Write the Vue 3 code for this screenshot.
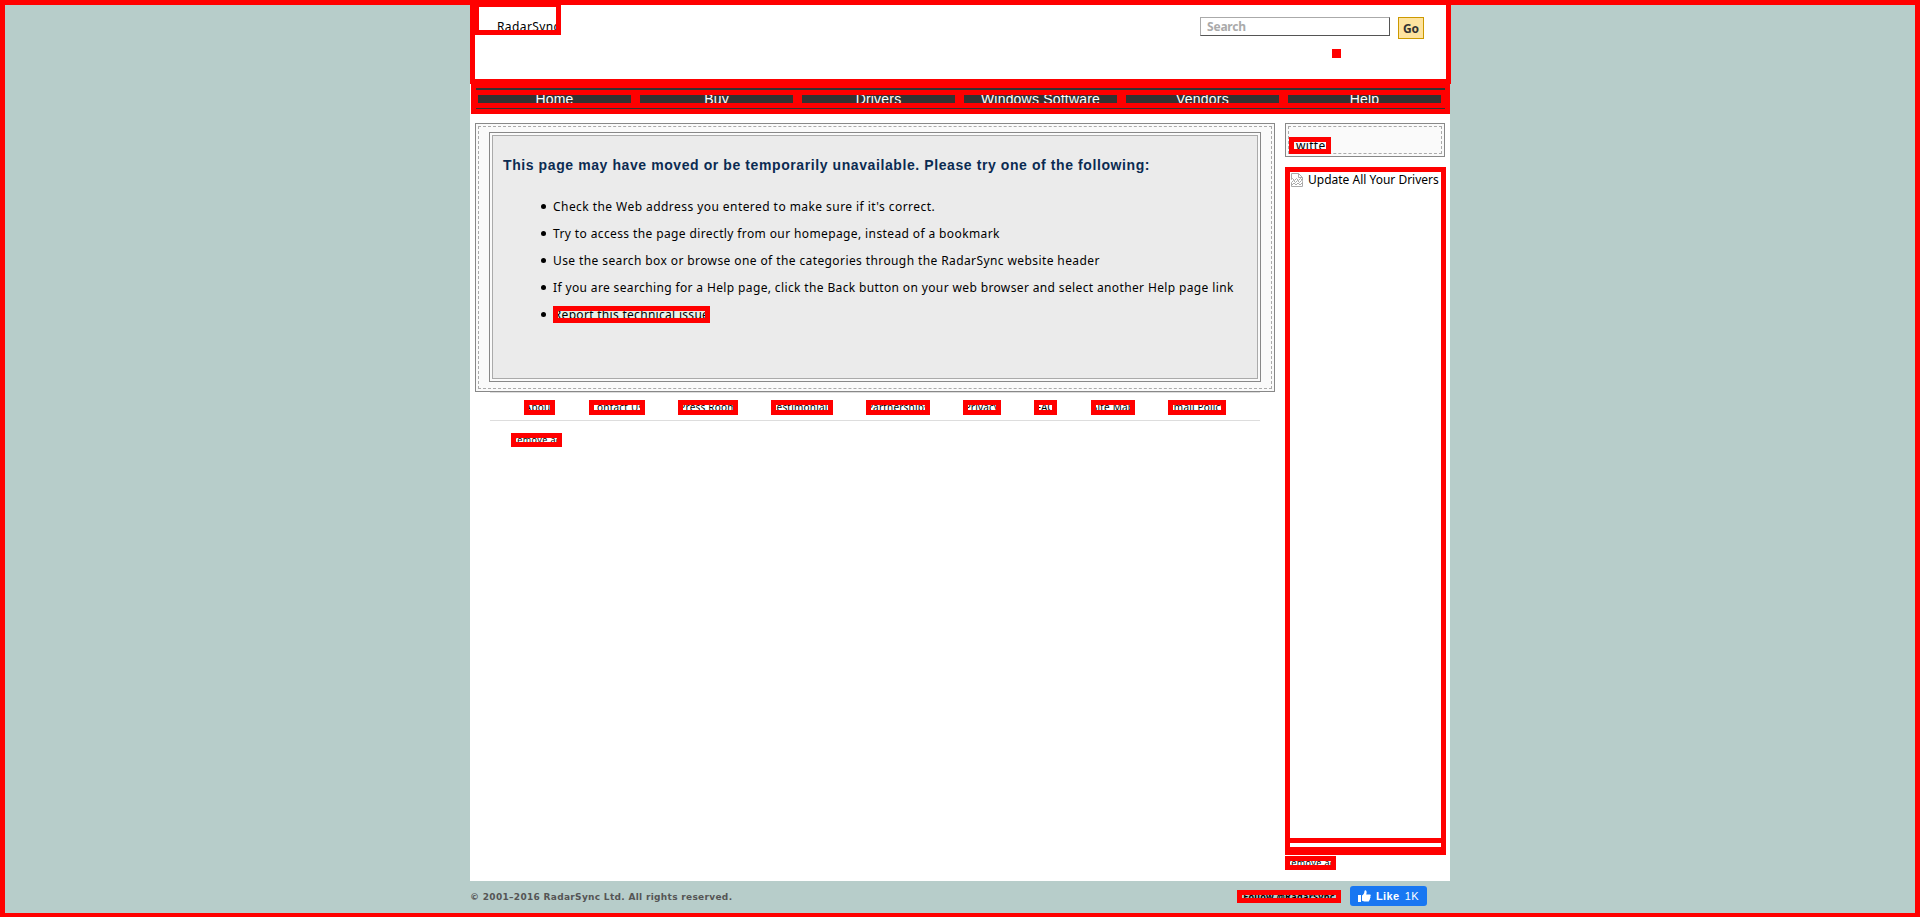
<script setup>
const nav = ['Home', 'Buy', 'Drivers', 'Windows Software', 'Vendors', 'Help']
const tips = [
  { text: "Check the Web address you entered to make sure if it's correct.", gap: 0.44 },
  { text: 'Try to access the page directly from our homepage, instead of a bookmark', gap: 0.385 },
  { text: 'Use the search box or browse one of the categories through the RadarSync website header', gap: 0.4 },
  { text: 'If you are searching for a Help page, click the Back button on your web browser and select another Help page link', gap: 0.367 },
]
const links = [
  { text: 'About', w: 31, gap: 34 },
  { text: 'Contact Us', w: 56, gap: 33 },
  { text: 'Press Room', w: 60, gap: 33 },
  { text: 'Testimonials', w: 62, gap: 33 },
  { text: 'Partnerships', w: 64, gap: 33 },
  { text: 'Privacy', w: 38, gap: 33 },
  { text: 'FAQ', w: 23, gap: 34 },
  { text: 'Site Map', w: 44, gap: 33 },
  { text: 'Email Policy', w: 58, gap: 0 },
]
</script>

<template>
  <div class="page">
    <div class="wrap">
      <div class="sheet">
        <header class="header">
          <div class="logo">RadarSync</div>
          <div class="tools">
            <div class="search-row">
              <div class="search">Search</div>
              <div class="go">Go</div>
            </div>
            <div class="dot"></div>
          </div>
        </header>
        <nav class="nav">
          <div class="rule top"></div>
          <div class="items">
            <a v-for="n in nav" :key="n">{{ n }}</a>
          </div>
          <div class="rule"></div>
        </nav>
        <div class="columns">
          <main class="main">
            <div class="panel">
              <div class="dashed">
                <div class="frame">
                  <div class="inner">
                    <h1>This page may have moved or be temporarily unavailable. Please try one of the following:</h1>
                    <ul>
                      <li v-for="t in tips" :key="t.text" :style="{ letterSpacing: t.gap + 'px' }">{{ t.text }}</li>
                      <li><a class="box report">Report this technical issue</a></li>
                    </ul>
                  </div>
                </div>
              </div>
            </div>
            <div class="links">
              <a v-for="l in links" :key="l.text" class="box small" :style="{ width: l.w + 'px', marginRight: l.gap + 'px' }">{{ l.text }}</a>
            </div>
            <a class="box remove">Remove ad</a>
          </main>
          <aside class="side">
            <div class="panel twitter">
              <div class="dashed"><a class="box tw">Twitter</a></div>
            </div>
            <div class="ad">
              <div class="ad-main">
                <svg width="14" height="16" viewBox="0 0 14 16" fill="none" stroke="#aaa">
                  <path d="M1.5 7.5v-6h7l4 4v3l-2-2-2 2-2-2-2 2-2-2zM8.5 1.5v4h4M1.5 14.5v-4l2-2 2 2 2-2 2 2 2-2 1 1v5zM2 13l2-2 2 2 2-2 2 2 2-2" />
                </svg>
                <span>Update All Your Drivers</span>
              </div>
              <div class="ad-end"></div>
            </div>
            <a class="box remove side-remove">Remove ad</a>
          </aside>
        </div>
      </div>
      <footer class="footer">
        <span class="copy">© 2001–2016 RadarSync Ltd. All rights reserved.</span>
        <span class="box follow">Follow @RadarSync</span>
        <span class="like">
          <svg width="13" height="13" viewBox="0 0 13 13" fill="#fff">
            <path d="M0 5h3v7H0zM4 5.6C5.5 4.5 6.4 3 6.5.9 6.6.3 7 .1 7.5.2c1.2.3 1.5 2 .7 4.2h3.3c1.6 0 1.6 1.7.7 2.1.7.6.4 1.6-.3 1.8.4.7.1 1.4-.6 1.6.1.9-.3 1.5-1.4 1.5H6.4L4 10.8z" />
          </svg>
          <b>Like</b><i>1K</i>
        </span>
      </footer>
    </div>
  </div>
</template>

<style>
body { margin: 0; overflow: hidden; }
</style>

<style scoped>
* { box-sizing: border-box; }
.page {
  height: 917px;
  background: #b7cdca;
  border: 5px solid #f00;
  border-bottom-width: 4px;
  font-family: "Noto Sans", Tahoma, sans-serif;
  font-size: 12px;
  color: #000;
}
.wrap { width: 980px; margin: -5px auto 0; display: flex; flex-direction: column; }
.sheet { height: 881px; background: #fff; border-top: 5px solid #f00; }
.header {
  height: 84px;
  width: 981px;
  margin-top: -5px;
  border: 5px solid #f00;
  display: flex;
  justify-content: space-between;
}
.logo {
  width: 87px;
  height: 33px;
  margin: -3px 0 0 -1px;
  border: 5px solid #f00;
  padding-left: 18px;
  line-height: 39px;
  letter-spacing: 0.4px;
  overflow: hidden;
  white-space: nowrap;
}
.tools { width: 246px; padding-top: 12px; }
.search-row { display: flex; gap: 8px; height: 22px; }
.search {
  width: 190px;
  height: 19px;
  border: 1px solid #aaa;
  border-right-color: #555;
  border-bottom-color: #555;
  padding-left: 6px;
  line-height: 17px;
  font-weight: bold;
  letter-spacing: -0.2px;
  color: #aaa;
}
.go {
  width: 26px;
  height: 22px;
  border: 1px solid #c90;
  background: #fee39f;
  color: #333;
  font-weight: bold;
  text-align: center;
  line-height: 21px;
}
.dot { width: 9px; height: 9px; margin: 10px 0 0 132px; background: #f00; }
.nav {
  width: 979px;
  height: 35px;
  margin: -5px 0 0 1px;
  background: #f00;
  padding: 9px 5px 5px;
  display: flex;
  flex-direction: column;
}
.rule { height: 1px; background: #333; }
.rule.top { height: 2px; }
.items { height: 18px; padding: 5px 4px 5px 2px; display: flex; gap: 9px; }
.items a {
  width: 153px;
  height: 8px;
  background: #333;
  color: #fff;
  font: 14px/8px "Liberation Sans", sans-serif;
  letter-spacing: 0.2px;
  text-align: center;
  overflow: hidden;
}
.columns { display: flex; gap: 10px; padding: 9px 0 0 5px; }
.main { width: 800px; flex: none; }
.panel { border: 1px solid #888; background: #fafafa; padding: 2px; }
.dashed { border: 1px dashed #aaa; }
.main .dashed { height: 263px; padding: 5px 10px; }
.frame { height: 250px; border: 1px solid #888; padding: 2px; background: #fafafa; }
.inner { height: 244px; border: 1px solid #aaa; background: #ebebeb; padding: 19px 11px 0 10px; }
h1 {
  margin: 0;
  font: bold 14px/20px "Liberation Sans", sans-serif;
  letter-spacing: 0.59px;
  color: #0b2b52;
  white-space: nowrap;
}
ul { margin: 18px 0 0 50px; padding: 0; list-style: none; }
li {
  height: 27px;
  line-height: 27px;
  letter-spacing: 0.3px;
  white-space: nowrap;
  display: flex;
  align-items: center;
}
li::before { content: ""; width: 5px; height: 5px; margin: 0 7px 0 -12px; border-radius: 50%; background: #000; flex: none; }
.box {
  display: flex;
  justify-content: center;
  align-items: center;
  border: 5px solid #f00;
  overflow: hidden;
  white-space: nowrap;
  flex: none;
}
.report { width: 157px; height: 17px; background: #e9efe5; }
.links {
  height: 29px;
  margin: 0 15px;
  border: 1px solid #ddd;
  border-width: 1px 0;
  padding: 7px 0 0 34px;
  display: flex;
}
.small { height: 15px; font-size: 10px; letter-spacing: 0.2px; line-height: 5px; padding-bottom: 1px; }
.remove { width: 51px; height: 14px; margin: 12px 0 0 36px; font-size: 9px; letter-spacing: 0.4px; line-height: 4px; padding-bottom: 1px; }
.side { width: 161px; flex: none; }
.twitter { width: 160px; height: 34px; }
.twitter .dashed { height: 28px; padding-top: 10px; }
.tw { width: 42px; height: 17px; letter-spacing: 0.3px; background: #fafafa; }
.ad { height: 688px; margin-top: 10px; border: 5px solid #f00; border-bottom-width: 8px; }
.ad-main {
  height: 671px;
  border-bottom: 5px solid #f00;
  display: flex;
  align-items: flex-start;
  gap: 4px;
  white-space: nowrap;
  line-height: 16px;
}
.ad-end { height: 4px; }
.side-remove { margin: 1px 0 0; }
.footer { height: 32px; display: flex; align-items: flex-start; padding-top: 5px; }
.copy {
  width: 767px;
  padding-top: 4px;
  font: bold 9px/14px "DejaVu Sans", Verdana, sans-serif;
  letter-spacing: 0.31px;
  color: #555;
}
.follow {
  width: 104px;
  height: 13px;
  margin-top: 4px;
  font-size: 9px;
  font-weight: bold;
  background: #b7cdca;
  letter-spacing: 0.3px;
  line-height: 3px;
  padding-bottom: 1px;
}
.like {
  width: 77px;
  height: 20px;
  margin-left: 9px;
  border-radius: 3px;
  background: #1877f2;
  color: #fff;
  font: 11px/20px "Liberation Sans", sans-serif;
  letter-spacing: 0.4px;
  padding-left: 8px;
  display: flex;
  align-items: center;
}
.like b { margin: 0 5px 0 5px; }
.like i { font-style: normal; }
</style>
